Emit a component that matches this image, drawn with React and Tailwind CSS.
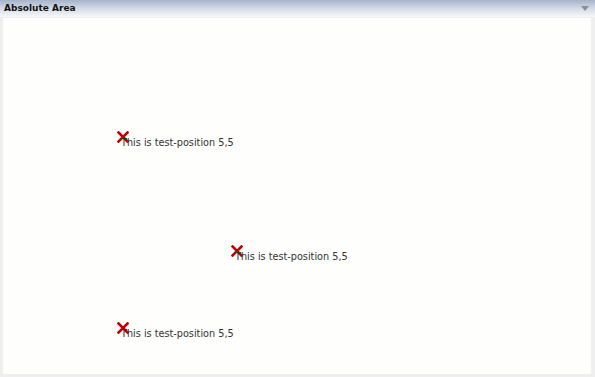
const items = [
  { x: 117, y: 131 },
  { x: 231, y: 245 },
  { x: 117, y: 322 },
];

function CrossIcon() {
  return (
    <svg width="12" height="12" viewBox="0 0 12 12" className="absolute left-0 top-0">
      <path d="M1.5 1.5 L10.5 10.5 M10.5 1.5 L1.5 10.5" stroke="#c00000" strokeWidth="2.6" strokeLinecap="square" />
    </svg>
  );
}

export default function App() {
  return (
    <div className="w-[595px] h-[377px] flex flex-col bg-white overflow-hidden" style={{ fontFamily: '"DejaVu Sans", sans-serif' }}>
      {/* Header */}
      <div className="h-[17px] shrink-0 flex items-center justify-between pl-1 pr-[6px] bg-gradient-to-b from-[#a7b3c9] via-[#d5dbe6] to-[#f7f8fa]">
        <span className="text-[9px] font-bold text-[#111] leading-none">Absolute Area</span>
        <svg width="8" height="5" viewBox="0 0 8 5">
          <path d="M0 0 H8 L4 5 Z" fill="#8a8f99" />
        </svg>
      </div>

      {/* Canvas */}
      <div className="flex-1 border-l-[3px] border-r-[4px] border-b-[3px] border-t border-[#efefef] bg-[#fefefc] relative">
        {items.map((it, i) => (
          <div key={i} className="absolute" style={{ left: it.x - 3, top: it.y - 18 }}>
            <CrossIcon />
            <span className="absolute left-[4px] top-[6px] whitespace-nowrap text-[9.7px] text-[#333] leading-[12px]">
              This is test-position 5,5
            </span>
          </div>
        ))}
      </div>
    </div>
  );
}
